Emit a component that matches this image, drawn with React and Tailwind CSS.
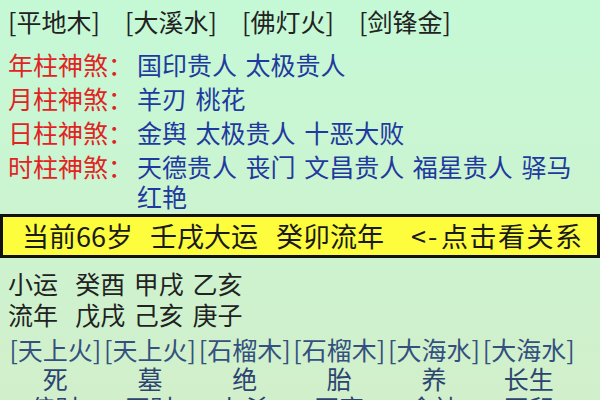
const nayin = ['[平地木]', '[大溪水]', '[佛灯火]', '[剑锋金]'];

const shensha = [
  { label: '年柱神煞：', value: '国印贵人 太极贵人' },
  { label: '月柱神煞：', value: '羊刃 桃花' },
  { label: '日柱神煞：', value: '金舆 太极贵人 十恶大败' },
  { label: '时柱神煞：', value: '天德贵人 丧门 文昌贵人 福星贵人 驿马 红艳' },
];

const liunianNayin = ['[天上火]', '[天上火]', '[石榴木]', '[石榴木]', '[大海水]', '[大海水]'];
const changsheng = ['死', '墓', '绝', '胎', '养', '长生'];
const shishen = ['偏财', '正财', '七杀', '正官', '食神', '正印'];

export default function App() {
  return (
    <div
      className="w-[600px] h-[400px] overflow-hidden bg-gradient-to-b from-[#c5f9d6] to-[#d2efcb] text-[25px] [word-spacing:3px]"
      style={{ fontFamily: '"Noto Sans CJK SC", "Noto Sans", sans-serif' }}
    >
      <div className="flex pl-2 mt-[6px] leading-[30px] text-[#222]">
        {nayin.map((n) => (
          <span key={n} className="w-[117px] shrink-0">{n}</span>
        ))}
      </div>

      <div className="mt-[13px]">
        {shensha.map((row) => (
          <div key={row.label} className="flex pl-2 mt-[4px] leading-[30px]">
            <span className="w-[129px] shrink-0 text-[#e02424]">{row.label}</span>
            <span className="flex-1 pr-2 text-[#1f3a9e]">{row.value}</span>
          </div>
        ))}
      </div>

      {/* 当前大运条 */}
      <div className="mt-[3px] h-[44px] border-[3px] border-[#111] bg-[#fdfd3e] pl-[19px] flex items-center leading-[38px] text-[27px] text-[#1a1a1a] whitespace-pre">
        <span className="w-[128px] shrink-0">当前66岁</span>
        <span className="w-[126px] shrink-0">壬戌大运</span>
        <span className="w-[135px] shrink-0">癸卯流年</span>
        <span className="w-[30px] shrink-0 tracking-[2px]">&lt;-</span>
        <span className="tracking-[1.5px]">点击看关系</span>
      </div>

      <div className="mt-[10px] pl-2 leading-[31px] text-[#222] whitespace-pre">
        <div>小运  癸酉 甲戌 乙亥</div>
        <div>流年  戊戌 己亥 庚子</div>
      </div>

      <div className="mt-[4px] ml-2 w-[568px] grid grid-cols-6 leading-[31px] text-[#34507f]">
        {liunianNayin.map((n, i) => (
          <span key={i} className="text-center">{n}</span>
        ))}
      </div>
      <div className="ml-2 w-[568px] grid grid-cols-6 leading-[27px] text-[#2c4470]">
        {changsheng.map((n, i) => (
          <span key={i} className="text-center">{n}</span>
        ))}
      </div>
      <div className="ml-2 w-[568px] grid grid-cols-6 leading-[30px] text-[#2c4470]">
        {shishen.map((n, i) => (
          <span key={i} className="text-center">{n}</span>
        ))}
      </div>
    </div>
  );
}
